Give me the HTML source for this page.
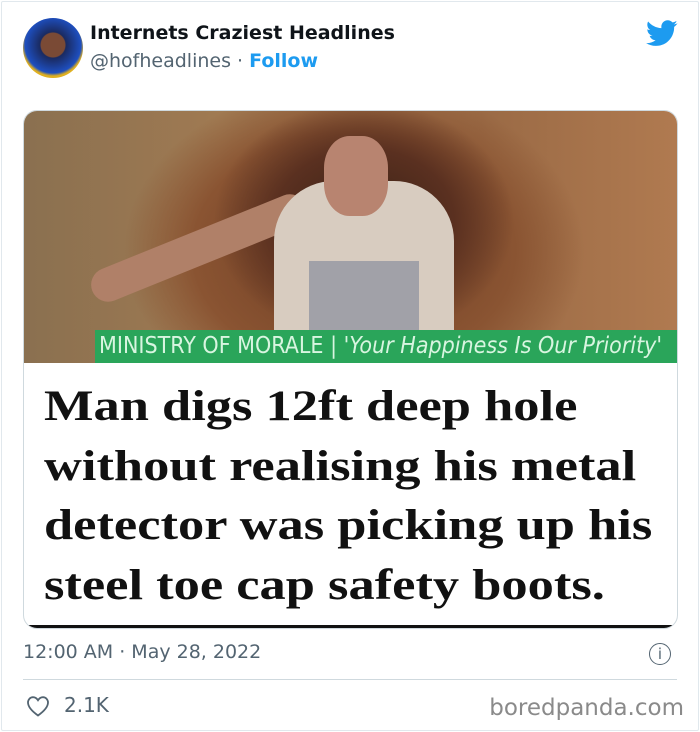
<!DOCTYPE html>
<html><head><style>
body{margin:0;width:700px;height:732px;background:#fff;font-family:"DejaVu Sans","Liberation Sans",sans-serif;position:relative;overflow:hidden}
.frame{position:absolute;left:1px;top:1px;width:696px;height:728px;border:1px solid #e1e8ed;border-radius:2px}
.av{position:absolute;left:23px;top:18px;width:60px;height:60px;border-radius:50%;background:radial-gradient(circle at 50% 45%,#7a4a35 0 12px,#1a2a60 13px,#1e4fc0 28px,#e0b020 31px)}
.name{position:absolute;left:90px;top:22px;font-weight:bold;font-size:19px;color:#0f1419}
.handle{position:absolute;left:90px;top:50px;font-size:19px;color:#536471}
.handle b{color:#1d9bf0}
.card{position:absolute;left:23px;top:110px;width:653px;height:517px;border:1px solid #cfd9de;border-radius:14px;overflow:hidden;background:#fff}
.photo{position:absolute;left:0;top:0;width:653px;height:252px;overflow:hidden;background:
radial-gradient(ellipse 150px 120px at 340px 110px,#3a2216 0,#5a3020 60%,transparent 100%),
radial-gradient(ellipse 230px 170px at 330px 140px,#6b3b22 0,#8a5432 70%,transparent 100%),
linear-gradient(90deg,#8a7050,#a07a52 30%,#9a6a45 70%,#b07a50)}
.man{position:absolute;left:250px;top:70px;width:180px;height:200px;background:#d8ccc0;border-radius:60px 60px 0 0}
.over{position:absolute;left:285px;top:150px;width:110px;height:110px;background:#6a7590;opacity:.5}
.head{position:absolute;left:300px;top:25px;width:64px;height:80px;background:#b88470;border-radius:40%}
.arm{position:absolute;left:60px;top:120px;width:230px;height:34px;background:#b08068;transform:rotate(-22deg);border-radius:20px}
.green{position:absolute;left:71px;top:219px;width:582px;height:33px;background:#2aa55a;color:#d8f5e0;font-family:"DejaVu Sans Condensed","Liberation Sans Narrow","Liberation Sans",sans-serif;font-size:23px;line-height:33px;white-space:nowrap;overflow:hidden;padding-left:4px}
.hl{position:absolute;left:20px;top:266px;font-family:"Liberation Serif",serif;font-weight:bold;font-size:43px;line-height:59.5px;color:#111;white-space:nowrap;transform:scaleX(1.22);transform-origin:0 0}
.bar{position:absolute;left:0;bottom:0;width:653px;height:3px;background:#111}
.time{position:absolute;left:23px;top:641px;font-size:19px;color:#536471}
.info{position:absolute;left:649px;top:643px;width:20px;height:20px;border:1.6px solid #536471;border-radius:50%;font-size:15px;text-align:center;line-height:20px;color:#536471}
.line{position:absolute;left:23px;top:679px;width:654px;height:1px;background:#cfd9de}
.likes{position:absolute;left:64px;top:693px;font-size:20px;color:#536471}
.bp{position:absolute;right:16px;top:695px;font-size:23px;color:#8a8a8a}
</style></head><body>
<div class="frame"></div>
<div class="av"></div>
<div class="name">Internets Craziest Headlines</div>
<div class="handle">@hofheadlines · <b>Follow</b></div>
<svg style="position:absolute;left:646px;top:20px" width="32" height="27" viewBox="0 0 24 20"><path fill="#1d9bf0" d="M23.6 2.4c-.9.4-1.8.6-2.8.8 1-.6 1.8-1.5 2.1-2.7-.9.6-2 1-3.1 1.2C19 .7 17.7.1 16.3.1c-2.7 0-4.8 2.200-4.8 4.8 0 .4 0 .8.1 1.100C7.5 5.8 4 3.9 1.6 1 1.200 1.700 1 2.500 1 3.400c0 1.700.9 3.200 2.200 4-.8 0-1.500-.2-2.200-.6v.1c0 2.300 1.700 4.300 3.900 4.700-.4.1-.8.2-1.300.2-.3 0-.6 0-.9-.1.6 1.900 2.400 3.300 4.500 3.400-1.700 1.300-3.800 2.100-6 2.100-.4 0-.8 0-1.200-.1 2.100 1.400 4.700 2.200 7.400 2.200 8.900 0 13.700-7.400 13.700-13.700v-.6c1-.7 1.800-1.600 2.500-2.500z"/></svg>
<div class="card">
<div class="photo"><div class="arm"></div><div class="man"></div><div class="over"></div><div class="head"></div></div>
<div class="green">MINISTRY OF MORALE | <i>'Your Happiness Is Our Priority'</i></div>
<div class="hl">Man digs 12ft deep hole<br>without realising his metal<br>detector was picking up his<br>steel toe cap safety boots.</div>
<div class="bar"></div>
</div>
<div class="time">12:00 AM · May 28, 2022</div>
<div class="info">i</div>
<div class="line"></div>
<svg style="position:absolute;left:26px;top:695px" width="24" height="22" viewBox="0 0 24 22"><path d="M12 20.5C5 15.5 2 11.5 2 7.5 2 4.5 4.3 2.2 7 2.2c2 0 3.8 1.2 5 3 1.2-1.8 3-3 5-3 2.7 0 5 2.3 5 5.3 0 4-3 8-10 13z" fill="none" stroke="#536471" stroke-width="1.8"/></svg>
<div class="likes">2.1K</div>
<div class="bp">boredpanda.com</div>
</body></html>
